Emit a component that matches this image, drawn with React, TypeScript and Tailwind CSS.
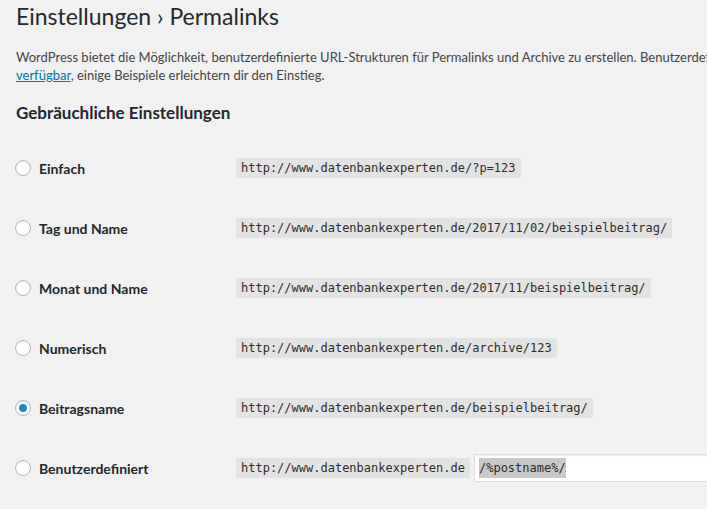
import React from 'react';

const options = [
  { label: 'Einfach', url: 'http://www.datenbankexperten.de/?p=123' },
  { label: 'Tag und Name', url: 'http://www.datenbankexperten.de/2017/11/02/beispielbeitrag/' },
  { label: 'Monat und Name', url: 'http://www.datenbankexperten.de/2017/11/beispielbeitrag/' },
  { label: 'Numerisch', url: 'http://www.datenbankexperten.de/archive/123' },
  { label: 'Beitragsname', url: 'http://www.datenbankexperten.de/beispielbeitrag/', checked: true },
];

function Radio({ checked }: { checked?: boolean }) {
  return (
    <span className="w-4 h-4 rounded-full border border-[#b4b9be] bg-white shadow-[inset_0_1px_2px_rgba(0,0,0,0.1)] flex items-center justify-center shrink-0">
      {checked && <span className="w-2 h-2 rounded-full bg-[#1e8cbe]" />}
    </span>
  );
}

const mono = { fontFamily: '"DejaVu Sans Mono", monospace' };

export default function App() {
  return (
    <div
      className="w-[707px] h-[509px] overflow-hidden bg-[#f1f1f1] text-[#23282d]"
      style={{ fontFamily: 'Lato, sans-serif' }}
    >
      <div className="pl-4 pt-[2px]">
        <h1 className="text-[23px] leading-[29px] font-normal">Einstellungen › Permalinks</h1>

        <p className="mt-[17px] text-[13px] leading-[18px] text-[#444] whitespace-nowrap">
          WordPress bietet die Möglichkeit, benutzerdefinierte URL-Strukturen für Permalinks und Archive zu erstellen. Benutzerdefinierte URL-Strukturen
          <br />
          <a className="text-[#0073aa] underline">verfügbar</a>, einige Beispiele erleichtern dir den Einstieg.
        </p>

        <h2 className="mt-[18px] text-[17px] leading-[22px] font-bold">Gebräuchliche Einstellungen</h2>

        <div className="mt-[34px] flex flex-col gap-10">
          {options.map((o) => (
            <div key={o.label} className="flex items-center h-5">
              <div className="w-[221px] shrink-0 flex items-center gap-2 -ml-[1px]">
                <Radio checked={o.checked} />
                <span className="text-[14px] font-bold">{o.label}</span>
              </div>
              <code className="shrink-0 bg-[#e3e3e3] px-[5px] h-5 flex items-center text-[12px] text-[#2c2c2c]" style={mono}>
                {o.url}
              </code>
            </div>
          ))}
          <div className="flex items-center h-5">
            <div className="w-[221px] shrink-0 flex items-center gap-2 -ml-[1px]">
              <Radio />
              <span className="text-[14px] font-bold">Benutzerdefiniert</span>
            </div>
            <code className="shrink-0 bg-[#e3e3e3] px-[5px] h-5 flex items-center text-[12px] text-[#2c2c2c]" style={mono}>
              http://www.datenbankexperten.de
            </code>
            <div className="ml-[4px] w-[260px] h-[28px] bg-white border border-[#ddd] shadow-[inset_0_1px_2px_rgba(0,0,0,0.07)] flex items-center px-[4px] shrink-0">
              <span className="bg-[#c8c8c8] text-[12px] text-[#2c2c2c] leading-[20px]" style={mono}>
                /%postname%/
              </span>
            </div>
          </div>
        </div>
      </div>
    </div>
  );
}
